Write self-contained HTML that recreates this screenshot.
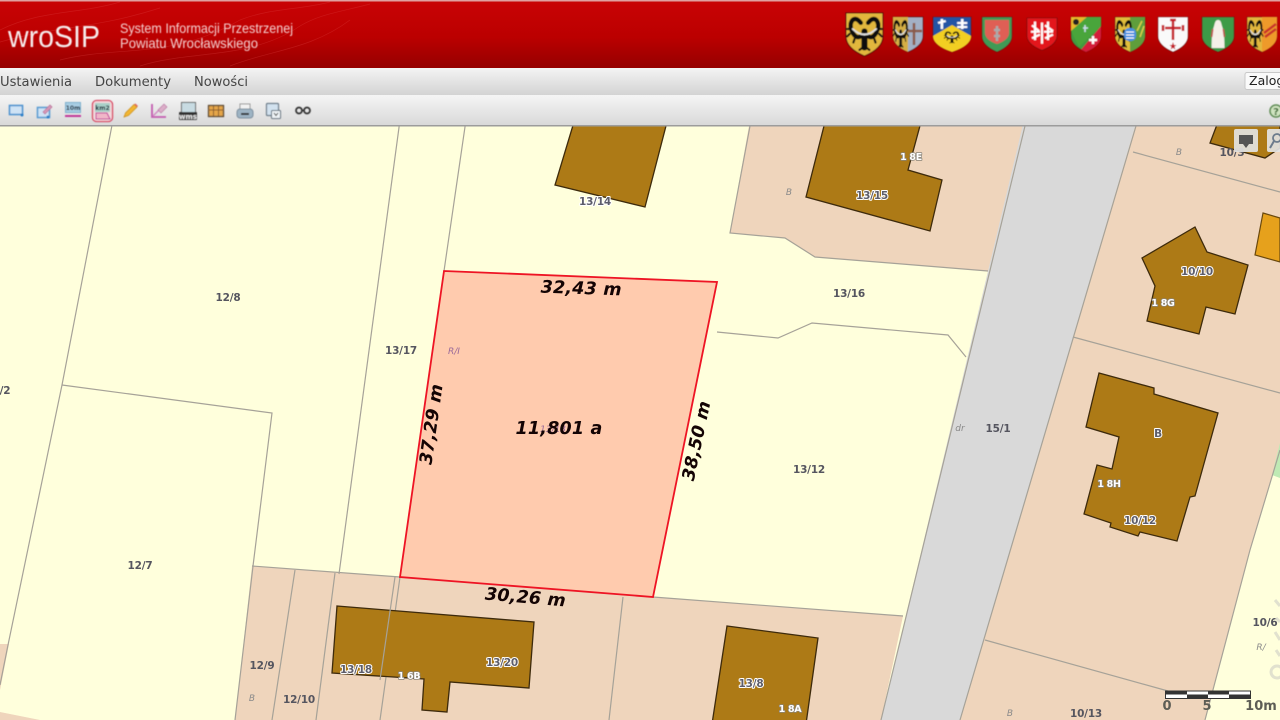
<!DOCTYPE html>
<html lang="pl">
<head>
<meta charset="utf-8">
<title>wroSIP</title>
<style>
html,body{margin:0;padding:0;width:1280px;height:720px;overflow:hidden;background:#ffffdc}
svg{display:block;position:absolute;left:0;top:0}
.lb{font:bold 10.5px "DejaVu Sans","Liberation Sans",sans-serif;fill:#55555f;text-anchor:middle;letter-spacing:-.2px}
.hl{paint-order:stroke;stroke:#fff;stroke-width:2px;stroke-linejoin:round;fill:#5d5d6a}
.wh{font-size:9.500px;letter-spacing:-.3px;paint-order:stroke;stroke:#8a8478;stroke-width:1.500px;stroke-linejoin:round;fill:#fff}
.sm{font:italic 9px "DejaVu Sans",sans-serif;fill:#8a8a8a;text-anchor:middle}
.ms{font:italic bold 17.5px "DejaVu Sans",sans-serif;fill:#140404;text-anchor:middle;letter-spacing:.2px}
.menu{font:13.5px "DejaVu Sans",sans-serif;fill:#444}
.ln{fill:none;stroke:#a6a298;stroke-width:1.200}
.bd{fill:#ad7a14;stroke:#3d2a08;stroke-width:1.300}
</style>
</head>
<body>
<svg width="1280" height="720" viewBox="0 0 1280 720" xmlns="http://www.w3.org/2000/svg">
<defs>
<linearGradient id="hd" x1="0" y1="0" x2="0" y2="1"><stop offset="0" stop-color="#c90305"/><stop offset=".55" stop-color="#bb0000"/><stop offset="1" stop-color="#950000"/></linearGradient>
<linearGradient id="mn" x1="0" y1="0" x2="0" y2="1"><stop offset="0" stop-color="#f4f4f4"/><stop offset="1" stop-color="#d3d3d3"/></linearGradient>
<linearGradient id="tb" x1="0" y1="0" x2="0" y2="1"><stop offset="0" stop-color="#f5f5f5"/><stop offset="1" stop-color="#d9d9d9"/></linearGradient>
<clipPath id="sc"><path d="M0 0H30V19C30 27 22 32 15 35C8 32 0 27 0 19Z"/></clipPath>
<path id="sp" d="M0 0H30V19C30 27 22 32 15 35C8 32 0 27 0 19Z"/>
<g id="eg" fill="none" stroke="#111" stroke-linecap="round">
<path d="M12 8C9 4 6 4 4.500 7 3 10 4 14 6 17 8 20 10 20 12 19" stroke-width="3.600"/>
<path d="M18 8C21 4 24 4 25.500 7 27 10 26 14 24 17 22 20 20 20 18 19" stroke-width="3.600"/>
<path d="M15 15V28" stroke-width="5"/>
<path d="M11 30 15 27 19 30M3 13H1M27 13H29M3 17 1 19M27 17 29 19M7 21 6 24M23 21 24 24" stroke-width="1.800"/>
<path d="M5.500 13Q15 22 24.500 13" stroke="#e2e2e2" stroke-width="1.500"/>
</g>
<filter id="sb" x="-5%" y="-5%" width="110%" height="110%"><feGaussianBlur stdDeviation=".3"/></filter>
<filter id="ib" x="-5%" y="-5%" width="110%" height="110%"><feGaussianBlur stdDeviation=".4"/></filter>
</defs>

<!-- MAP -->
<g filter="url(#sb)">
<rect x="0" y="120" width="1280" height="600" fill="#ffffdc"/>
<path d="M750 120H1030L988 271 815 257 785 238 730 233Z" fill="#efd5bc"/>
<path d="M1136 120H1280V450L1250 550 1205 720H960Z" fill="#efd5bc"/>
<path d="M252 566 400 577 653 597 903 616 881 720H235Z" fill="#efd5bc"/>
<path d="M0 644H9L0 690Z" fill="#efd5bc"/>
<path d="M0 712 40 720H0Z" fill="#efd5bc"/>
<path d="M1024 120H1137L960 720H881Z" fill="#d9d9d9"/>
<path d="M1280 443 1272 475 1280 478Z" fill="#bfeab4"/>
<path class="ln" d="M113 120 62 385 8 645 0 685"/>
<path class="ln" d="M62 385 272 413 253 566 235 720"/>
<path class="ln" d="M400 120 339 574"/>
<path class="ln" d="M466 120 444 271"/>
<path class="ln" d="M252 566 400 577 653 597 903 616"/>
<path class="ln" d="M295 570 272 720"/>
<path class="ln" d="M335 573 316 720"/>
<path class="ln" d="M400 577 380 720"/>
<path class="ln" d="M623 597 609 720"/>
<path class="ln" d="M750 126 730 233 785 238 815 257 988 271"/>
<path class="ln" d="M717 332 778 338 812 323 948 335 966 357"/>
<path class="ln" d="M1025 126 881 720"/>
<path class="ln" d="M1136 126 960 720"/>
<path class="ln" d="M1133 152 1280 192"/>
<path class="ln" d="M1073 337 1280 393"/>
<path class="ln" d="M985 640 1168 691"/>
<path class="ln" d="M1280 450 1250 550 1205 720"/>
<path class="bd" d="M574 122H667L645 207 555 185Z"/>
<path class="bd" d="M825 122H921L908 170 942 180 930 231 806 197Z"/>
<path class="bd" d="M1218 122H1280V148L1265 158 1210 143Z"/>
<path class="bd" d="M1195 227 1207 252 1248 265 1235 314 1206 307 1199 334 1147 321 1155 286 1142 258Z"/>
<path d="M1263 213 1280 218V262L1255 255Z" fill="#e6a11e" stroke="#6a4a10" stroke-width="1.200"/>
<path class="bd" d="M1099 373 1154 388 1154 394 1218 413 1195 496 1190 497 1177 541 1140 532 1138 536 1110 527 1111 523 1084 514 1097 465 1112 469 1119 437 1086 427Z"/>
<path class="bd" d="M337 606 534 622 529 688 450 682 447 712 422 710 424 679 332 673Z"/>
<path class="ln" d="M395 577 380 680"/>
<path class="bd" d="M727 626 818 638 806 724H712Z"/>
<path d="M444 271 717 282 653 597 400 577Z" fill="#ffcbae"/>
</g>
<path d="M444 271 717 282 653 597 400 577Z" fill="none" stroke="#ee1424" stroke-width="1.800"/>

<!-- parcel labels -->
<text class="lb" x="228" y="301">12/8</text>
<text class="lb" x="401" y="354">13/17</text>
<text class="lb" x="5" y="394">/2</text>
<text class="lb" x="140" y="569">12/7</text>
<text class="lb" x="849" y="297">13/16</text>
<text class="lb" x="809" y="473">13/12</text>
<text class="lb" x="998" y="432">15/1</text>
<text class="lb" x="262" y="669">12/9</text>
<text class="lb" x="299" y="703">12/10</text>
<text class="lb" x="1086" y="717">10/13</text>
<text class="lb" x="1265" y="626">10/6</text>
<text class="lb" x="1232" y="156">10/3</text>
<text class="lb hl" x="595" y="205">13/14</text>
<text class="lb hl" x="872" y="199">13/15</text>
<text class="lb wh" x="911" y="160">1 8E</text>
<text class="lb hl" x="1197" y="275">10/10</text>
<text class="lb wh" x="1163" y="306">1 8G</text>
<text class="lb hl" x="1158" y="437">B</text>
<text class="lb wh" x="1109" y="487">1 8H</text>
<text class="lb hl" x="1140" y="524">10/12</text>
<text class="lb hl" x="356" y="673">13/18</text>
<text class="lb wh" x="409" y="679">1 6B</text>
<text class="lb hl" x="502" y="666">13/20</text>
<text class="lb hl" x="751" y="687">13/8</text>
<text class="lb wh" x="790" y="712">1 8A</text>
<text class="sm" x="789" y="195">B</text>
<text class="sm" x="1179" y="155">B</text>
<text class="sm" x="252" y="701">B</text>
<text class="sm" x="1010" y="716">B</text>
<text class="sm" x="960" y="431">dr</text>
<text class="sm" x="1261" y="650">R/</text>
<text class="sm" x="454" y="354" style="fill:#9a6a9a">R/I</text>
<text class="sm" x="553" y="432" style="fill:#9a6a9a">13/13</text>

<!-- measurements -->
<text class="ms" transform="translate(581 294) rotate(2)">32,43 m</text>
<text class="ms" transform="translate(437 425) rotate(-82)">37,29 m</text>
<text class="ms" transform="translate(702 442) rotate(-78)">38,50 m</text>
<text class="ms" transform="translate(525 603) rotate(5)">30,26 m</text>
<text class="ms" x="559" y="434">11,801 a</text>

<!-- scale -->
<g>
<rect x="1165.500" y="691" width="85" height="7.500" fill="#fff" stroke="#333" stroke-width="1"/>
<rect x="1166" y="691" width="21" height="3.500" fill="#333"/>
<rect x="1187" y="694.500" width="21" height="3.500" fill="#333"/>
<rect x="1208" y="691" width="21" height="3.500" fill="#333"/>
<rect x="1229" y="694.500" width="21" height="3.500" fill="#333"/>
<g style="font:bold 13px 'DejaVu Sans',sans-serif;fill:#5d5d55;text-anchor:middle">
<text x="1167" y="710">0</text><text x="1207" y="710">5</text><text x="1261" y="710">10m</text>
</g>
</g>
<g fill="none" stroke="#dcdccc" stroke-width="3" opacity=".85">
<circle cx="1277" cy="672" r="6"/><path d="M1275 600 1280 606M1276 618 1280 622M1275 632 1280 640M1276 650 1280 656"/>
</g>

<!-- HEADER -->
<rect x="0" y="0" width="1280" height="68" fill="url(#hd)"/>
<rect x="0" y="0" width="1280" height="1.500" fill="#e0a0a0"/>
<g fill="none" stroke="#e04a4a" stroke-width=".7" opacity=".3">
<path d="M0 30C40 10 80 14 120 2"/><path d="M0 42C60 25 90 30 160 8"/><path d="M60 60C120 45 170 60 240 20 270 8 300 10 330 2"/>
<path d="M140 66C190 50 250 60 300 26 320 14 340 12 370 4"/><path d="M230 66C270 50 310 50 350 20"/>
</g>
<g filter="url(#ib)">
<text x="8" y="47" textLength="92" lengthAdjust="spacingAndGlyphs" style="font:31px 'Liberation Sans',sans-serif;fill:#f6ecec">wroSIP</text>
<text x="120" y="33" textLength="173" lengthAdjust="spacingAndGlyphs" style="font:14px 'Liberation Sans',sans-serif;fill:#f5d0d0">System Informacji Przestrzenej</text>
<text x="120" y="48" textLength="138" lengthAdjust="spacingAndGlyphs" style="font:14px 'Liberation Sans',sans-serif;fill:#f5d0d0">Powiatu Wrocławskiego</text>
</g>

<!-- shields -->
<g filter="url(#ib)">
<g transform="translate(846 13) scale(1.23)"><use href="#sp" fill="#e2b73d" stroke="#4a1010" stroke-width=".8"/><g clip-path="url(#sc)"><use href="#eg"/></g></g>
<g transform="translate(893 17)"><use href="#sp" fill="#a3b0c5" stroke="#5a1515" stroke-width=".8"/><g clip-path="url(#sc)"><rect width="15" height="35" fill="#d4ae45"/><g transform="scale(.55 1) translate(-1 0)"><use href="#eg"/></g><path d="M21 6V28M15 14H29" stroke="#8a5a4a" stroke-width="2.500"/></g></g>
<g transform="translate(933 17) scale(1.27 1)"><use href="#sp" fill="#2255a5" stroke="#5a1515" stroke-width=".6"/><g clip-path="url(#sc)"><path d="M0 19 15 8 30 19V35H0Z" fill="#f2cf20"/><path d="M7 2V12M4 6 10 4M23 2V12M19 6H27M19 10H27" stroke="#fff" stroke-width="2"/><g transform="translate(8.500 13) scale(.43)"><use href="#eg"/></g></g></g>
<g transform="translate(982 17)"><use href="#sp" fill="#3f9a55" stroke="#5a1515" stroke-width=".6"/><path transform="translate(3 3) scale(.8)" d="M0 0H30V16C30 23 22 28 15 30C8 28 0 23 0 16Z" fill="#df5f55"/><path d="M15 9V24M12 13H18M12 19H18" stroke="#aaa" stroke-width="2.500"/></g>
<g transform="translate(1027 18) scale(1 .92)"><use href="#sp" fill="#e3141c" stroke="#5a1515" stroke-width=".6"/><path d="M8 4V24M5 8 12 14M4 15H13M5 22 13 18M21 4V24M18 8 26 14M17 15H26M18 22 26 18M15 5V28" stroke="#fff" stroke-width="2.200" fill="none"/></g>
<g transform="translate(1071 17)"><use href="#sp" fill="#3f9a3f" stroke="#5a1515" stroke-width=".6"/><g clip-path="url(#sc)"><path d="M0 0H16L0 14Z" fill="#e5b92b"/><path d="M30 9V35H8Z" fill="#d41a3a"/><path d="M0 14 16 0H30V9L8 30Z" fill="#4aa53a"/><path d="M18 23H26M22 19V27" stroke="#fff" stroke-width="2.500"/><path d="M12 11H17M14 8V15" stroke="#cde" stroke-width="1.500"/><circle cx="5" cy="5" r="3" fill="#222"/></g></g>
<g transform="translate(1115 17)"><use href="#sp" fill="#e0bd3a" stroke="#5a1515" stroke-width=".6"/><g clip-path="url(#sc)"><path d="M15 0H30V35H15Z" fill="#5f9e3a"/><g transform="scale(.6 1)"><use href="#eg"/></g><rect x="9" y="11" width="12" height="13" rx="5" fill="#4a8fe0"/><path d="M11 15H19M11 18H19M11 21H19" stroke="#fff"/><path d="M22 14 27 4M25 20 29 9" stroke="#d6d04a" stroke-width="1.500"/></g></g>
<g transform="translate(1158 17)"><use href="#sp" fill="#fafafa" stroke="#5a1515" stroke-width=".6"/><path d="M15 3V23M7 11H23M5 8V14M25 8V14M12 3H18" stroke="#c41a26" stroke-width="2.500" fill="none"/><path d="M15 25l1 3 2.500 0-2 1.800.8 2.700-2.300-1.600-2.300 1.600.8-2.700-2-1.800 2.500 0z" fill="#c41a26"/></g>
<g transform="translate(1202 17) scale(1.07 1)"><use href="#sp" fill="#3c9b46" stroke="#5a1515" stroke-width=".6"/><path d="M15 3C12 3 12 7 11 10 9 16 9 24 9 31H21C21 24 21 16 19 10 18 7 18 3 15 3Z" fill="#f5f0e8"/><path d="M10 12 9 20M20 12 21 20" stroke="#c05050" stroke-width="1.500"/></g>
<g transform="translate(1247 17)"><use href="#sp" fill="#e2b73d" stroke="#5a1515" stroke-width=".6"/><g clip-path="url(#sc)"><path d="M15 0H30V35H15Z" fill="#ee9a2a"/><g transform="scale(.55 1)"><use href="#eg"/></g><path d="M17 16 29 7M18 20 29 12" stroke="#c9312a" stroke-width="2.500"/></g></g>
</g>

<!-- MENU -->
<rect x="0" y="68" width="1280" height="27" fill="url(#mn)"/>
<text class="menu" x="0" y="86" textLength="72" lengthAdjust="spacingAndGlyphs">Ustawienia</text>
<text class="menu" x="95" y="86" textLength="76" lengthAdjust="spacingAndGlyphs">Dokumenty</text>
<text class="menu" x="194" y="86" textLength="54" lengthAdjust="spacingAndGlyphs">Nowości</text>
<rect x="1245" y="72.500" width="50" height="17" rx="2" fill="#fafafa" stroke="#c8c8c8"/>
<text x="1249" y="85" style="font:12.500px 'DejaVu Sans',sans-serif;fill:#222">Zaloguj</text>

<!-- TOOLBAR -->
<rect x="0" y="95" width="1280" height="30" fill="url(#tb)"/>
<rect x="0" y="125" width="1280" height="1.500" fill="#9c9c9c"/>
<g filter="url(#ib)">
<rect x="9.500" y="105.500" width="13" height="9" fill="#cfe3f5" stroke="#4e93cf" stroke-width="1.600"/><circle cx="22" cy="115" r="1.500" fill="#2a7fc9"/>
<rect x="37.500" y="107.500" width="12" height="10" fill="#cfe3f5" stroke="#5b9dd2" stroke-width="1.600"/><path d="M43 112 50 105 52 107 45 114Z" fill="#d69ab8" stroke="#b76a95" stroke-width=".7"/><circle cx="48" cy="117" r="1.500" fill="#2a7fc9"/>
<rect x="65.500" y="102.500" width="15" height="10" fill="#a8cde3" stroke="#7fb0ce"/><text x="73" y="110" style="font:bold 6px 'DejaVu Sans',sans-serif;fill:#123;text-anchor:middle">10m</text><rect x="65" y="115" width="16" height="2" fill="#c0399a"/>
<rect x="92.500" y="100.500" width="20" height="21" rx="4" fill="#f3d9dd" stroke="#d8405f" stroke-width="1.300"/><rect x="95" y="103" width="15" height="9" fill="#a8d0c8"/><text x="102.500" y="110" style="font:bold 6px 'DejaVu Sans',sans-serif;fill:#123;text-anchor:middle">km2</text><path d="M96 113H107L110 119H96Z" fill="#f0b6c8" stroke="#c0399a"/>
<path d="M124 117 125.500 113 134 104.500 137 107 128.500 115.500Z" fill="#f2b632" stroke="#c98a18" stroke-width=".7"/><path d="M134 104.500 137 107 138 106 135.500 103.500Z" fill="#e26a5a"/>
<path d="M152 104V117H166" fill="none" stroke="#c45cb0" stroke-width="1.800"/><path d="M153 116 164 105" stroke="#d28ac4" stroke-width="1.500"/><path d="M158 110 164 104 167 107 161 113Z" fill="#dcaec8" stroke="#b670a0" stroke-width=".6"/>
<rect x="181.500" y="102.500" width="14" height="10" fill="#c8dbe2" stroke="#666"/><rect x="179" y="112" width="18" height="8" rx="1" fill="#333"/><text x="188" y="119" style="font:bold 7px 'DejaVu Sans',sans-serif;fill:#eee;text-anchor:middle">wms</text>
<rect x="208.500" y="105.500" width="15" height="11" fill="#e5a64a" stroke="#5c4a36" stroke-width="1.300"/><path d="M208 110H224M213.500 106V116M218.500 106V116" stroke="#8a5c2e"/>
<path d="M240 104H250V110H240Z" fill="#f2f2f2" stroke="#9a9a9a"/><rect x="237" y="109" width="16" height="9" rx="3" fill="#9db4c4" stroke="#7d8f9e"/><rect x="241" y="113" width="8" height="2" fill="#333"/>
<rect x="266.500" y="103.500" width="12" height="12" rx="1" fill="#d2e2ef" stroke="#6a7a88" stroke-width="1.200"/><rect x="271.500" y="110.500" width="9" height="8" rx="1" fill="#eef3f6" stroke="#5a6a78"/><path d="M274 113 276 115.500 278 113" fill="none" stroke="#333"/>
<circle cx="299" cy="110.500" r="3" fill="none" stroke="#333" stroke-width="1.700"/><circle cx="307" cy="110.500" r="3" fill="none" stroke="#333" stroke-width="1.700"/><path d="M302 110.500H304" stroke="#333" stroke-width="1.500"/>
<circle cx="1276" cy="111" r="6" fill="#cfe3c0" stroke="#5a8a50" stroke-width="1.500"/><text x="1276" y="115" style="font:bold 10px 'DejaVu Sans',sans-serif;fill:#3a6a30;text-anchor:middle">?</text>
</g>

<!-- map overlay buttons -->
<rect x="1234" y="129" width="24" height="23" rx="2" fill="#e3e3e3" opacity=".92"/>
<path d="M1239 135H1253V144H1249L1246 148 1243 144H1239Z" fill="#555"/>
<rect x="1267" y="129" width="20" height="23" rx="2" fill="#e3e3e3" opacity=".92"/>
<circle cx="1277" cy="138" r="4" fill="none" stroke="#6d7c8c" stroke-width="1.800"/><path d="M1274 141 1270 148" stroke="#6d7c8c" stroke-width="2"/>
</svg>
</body>
</html>
